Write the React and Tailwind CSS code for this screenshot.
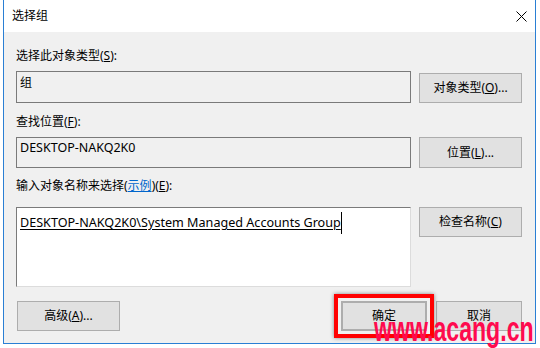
const FONT = { fontFamily: '"Noto Sans", "Noto Sans CJK SC", sans-serif' };

const WinButton = ({ children, className = "" }) => (
  <div
    className={`flex items-center justify-center bg-[#e1e1e1] border border-[#adadad] text-[12px] leading-[16px] text-black ${className}`}
  >
    {children}
  </div>
);

const Label = ({ children, className = "" }) => (
  <div className={`text-[12px] leading-[16px] text-black ${className}`}>{children}</div>
);

export default function App() {
  return (
    <div className="relative w-[540px] h-[348px] bg-white overflow-hidden" style={FONT}>
      {/* dialog window */}
      <div className="ml-[3px] w-[533px] border-x border-b border-[#2a7fd4] flex flex-col">
        {/* title bar */}
        <div className="h-[32px] bg-white flex items-center justify-between pl-[8px] pr-[8px]">
          <span className="text-[12px] leading-[16px] text-black">选择组</span>
          <svg width="11" height="11" viewBox="0 0 11 11" className="mt-[1px]">
            <path d="M0.5 0.5 L10.5 10.5 M10.5 0.5 L0.5 10.5" stroke="#000" strokeWidth="1" fill="none" />
          </svg>
        </div>

        {/* body */}
        <div className="bg-[#f0f0f0] pl-[12px] pr-[13px] pt-[16px] pb-[12px] flex flex-col">
          <Label>
            选择此对象类型(<u>S</u>):
          </Label>
          <div className="mt-[7px] flex gap-[8px]">
            <div className="w-[395px] h-[32px] border border-[#7a7a7a] bg-[#f0f0f0] pl-[3px] pt-[3px] text-[12px] leading-[16px]">
              组
            </div>
            <WinButton className="mt-[2px] w-[103px] h-[30px]">
              对象类型(<u>O</u>)...
            </WinButton>
          </div>

          <Label className="mt-[11px]">
            查找位置(<u>F</u>):
          </Label>
          <div className="mt-[7px] flex gap-[8px]">
            <div className="w-[395px] h-[31px] border border-[#7a7a7a] bg-[#f0f0f0] pl-[3px] pt-[2px] text-[12.5px] leading-[16px]">
              DESKTOP-NAKQ2K0
            </div>
            <WinButton className="w-[103px] h-[31px]">
              位置(<u>L</u>)...
            </WinButton>
          </div>

          <Label className="mt-[10px]">
            输入对象名称来选择(<u className="text-[#0066cc]">示例</u>)(<u>E</u>):
          </Label>
          <div className="mt-[13px] flex items-start gap-[8px]">
            <div className="w-[395px] h-[80px] bg-white border border-[#7a7a7a] border-r-[#dcdcdc] border-b-[#dcdcdc] pl-[3px] pt-[4px] text-[12.6px] leading-[16px]">
              <div className="flex items-center h-[22px]">
                <u className="underline-offset-2">DESKTOP-NAKQ2K0\System Managed Accounts Group</u>
                <span className="inline-block w-[1px] h-[22px] bg-black" />
              </div>
            </div>
            <WinButton className="w-[103px] h-[30px]">
              检查名称(<u>C</u>)
            </WinButton>
          </div>

          <div className="mt-[14px] flex justify-between">
            <WinButton className="ml-[1px] w-[103px] h-[30px]">
              高级(<u>A</u>)...
            </WinButton>
            <div className="flex gap-[9px]">
              <div className="relative">
                <div className="absolute -inset-[7px] border-4 border-[#ff0000] shadow-[0_0_4px_rgba(0,0,0,0.45)]" />
                <WinButton className="w-[86px] h-[30px] border-2 border-[#0078d7]">确定</WinButton>
              </div>
              <WinButton className="w-[86px] h-[30px]">取消</WinButton>
            </div>
          </div>
        </div>
      </div>

      {/* watermark */}
      <div
        className="absolute left-[374px] top-[311px] text-[35px] leading-[35px] font-bold text-[#ff0a4e] origin-left scale-x-[0.66] whitespace-nowrap"
        style={{ fontFamily: '"Liberation Sans", Arial, sans-serif' }}
      >
        www.acang.cn
      </div>
    </div>
  );
}
